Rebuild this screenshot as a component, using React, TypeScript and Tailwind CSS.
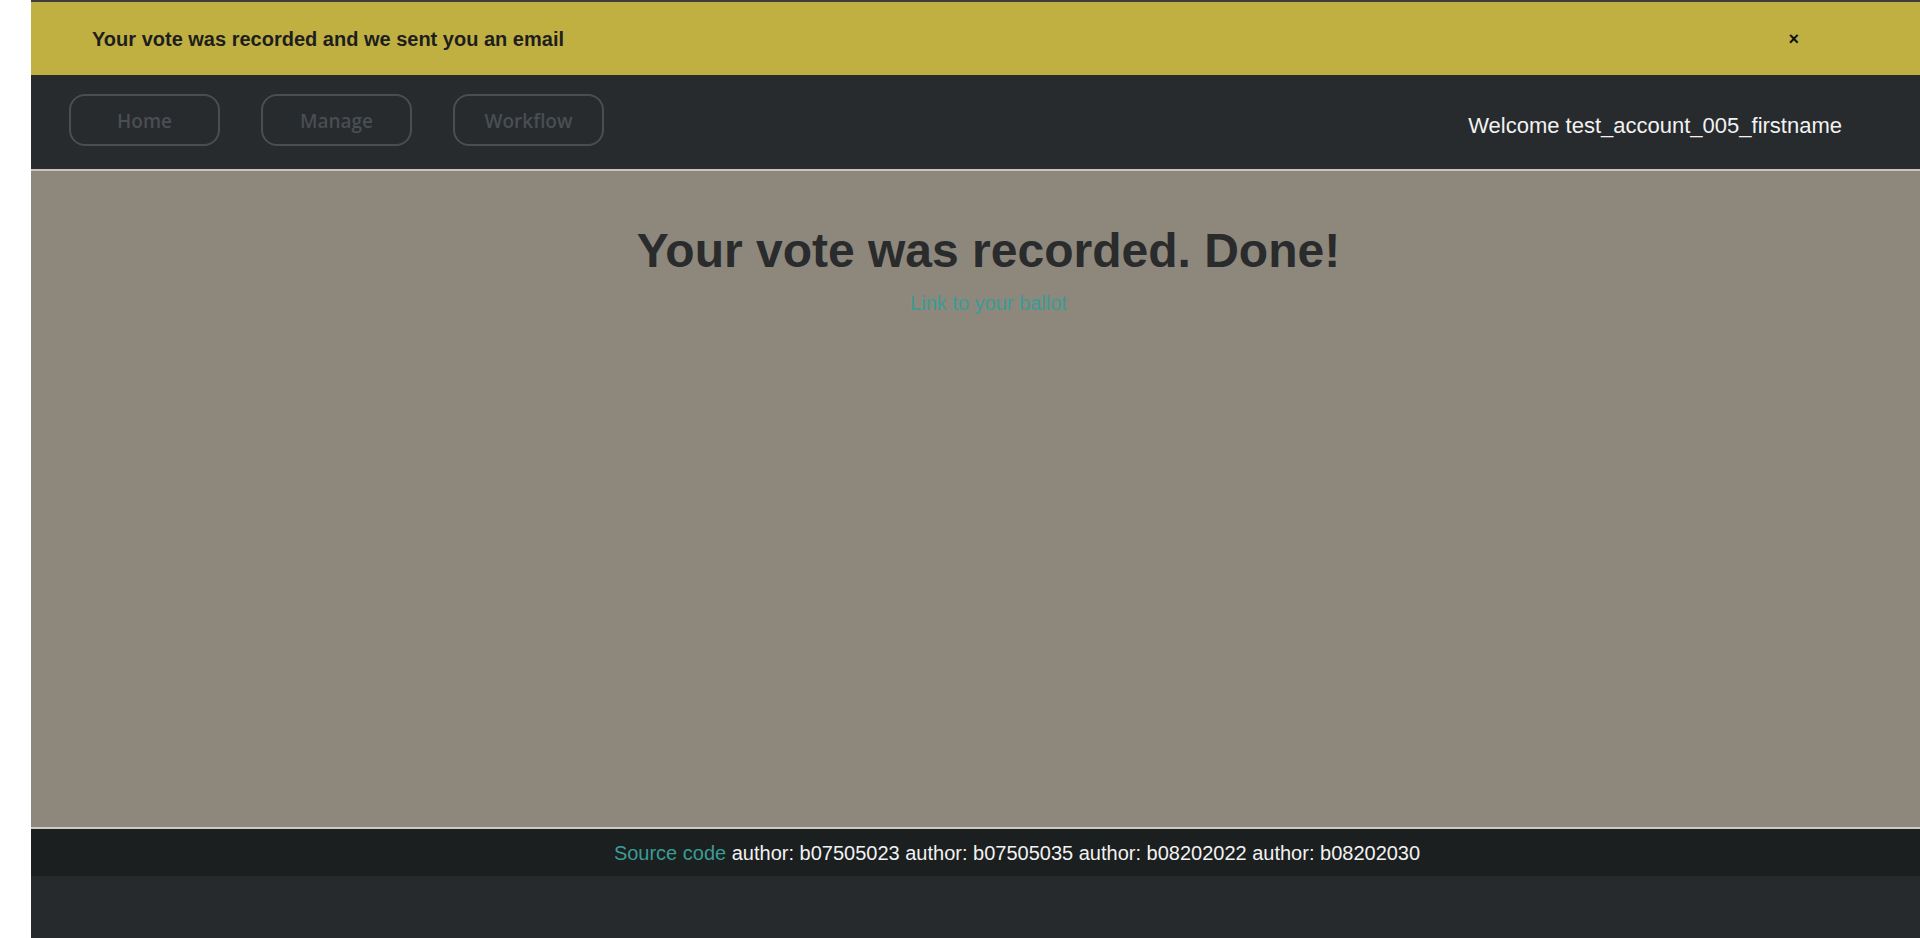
import React from "react";

export default function App() {
  return (
    <div className="flex min-h-[938px] w-full bg-white font-['Liberation_Sans',Arial,sans-serif]">
      <div className="w-[31px] shrink-0 bg-white" />
      <div className="flex flex-1 flex-col border-t-2 border-[#3c3c3c]">
        {/* Alert banner */}
        <div className="flex h-[73px] items-center justify-between bg-[#c0b042] pl-[61px] pr-[121px]">
          <span className="text-[20px] font-bold text-[#1e1e1e]">
            Your vote was recorded and we sent you an email
          </span>
          <span className="text-[18px] font-bold leading-none text-[#111111]">×</span>
        </div>
        {/* Nav */}
        <div className="flex h-[96px] items-center justify-between border-b-2 border-[#c9c5bd] bg-[#272b2e] pl-[38px] pr-[78px]">
          <div className="flex gap-[41px] pb-[4px]">
            {["Home", "Manage", "Workflow"].map((t) => (
              <button
                key={t}
                className="flex h-[52px] w-[151px] items-center justify-center rounded-[16px] border-2 border-[#4a4e52] pt-[3px] font-['Open_Sans',sans-serif] text-[19px] font-semibold text-[#4a4e52]"
              >
                {t}
              </button>
            ))}
          </div>
          <span className="pt-[6px] text-[22px] text-[#f2f2f2]">Welcome test_account_005_firstname</span>
        </div>
        {/* Main */}
        <main className="flex h-[656px] flex-col items-center bg-[#8e877c] pl-[26px] pt-[52px]">
          <h1 className="text-[48px] font-bold leading-[55px] text-[#292b2d]">Your vote was recorded. Done!</h1>
          <a className="mt-[14px] text-[20px] leading-[23px] text-[#3a9c95]">Link to your ballot</a>
        </main>
        <div className="h-[2px] bg-[#cfcbc3]" />
        {/* Footer */}
        <footer className="flex h-[47px] items-center justify-center bg-[#1b1f20] pl-[83px] text-[20px] text-[#f2f2f2]">
          <span>
            <span className="text-[#3a9c95]">Source code</span> author: b07505023 author: b07505035 author: b08202022 author: b08202030
          </span>
        </footer>
        <div className="flex-1 bg-[#262a2d]" />
      </div>
    </div>
  );
}
